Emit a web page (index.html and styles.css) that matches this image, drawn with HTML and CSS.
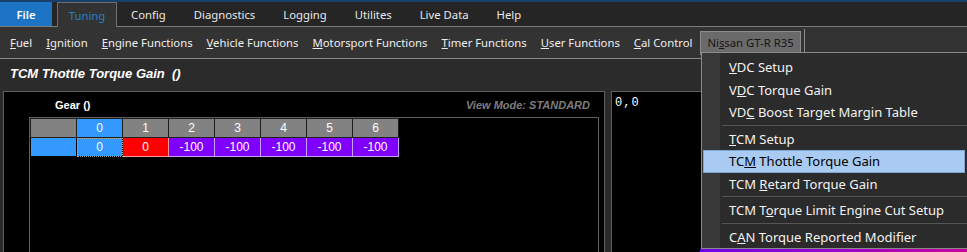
FILE: index.html
```html
<!DOCTYPE html>
<html lang="en">
<head>
    <meta charset="UTF-8">
    <title>TCM Thottle Torque Gain</title>
    <link rel="stylesheet" href="styles.css">
</head>
<body>
    <!--top tabs-->
    <header class="appbar">
        <nav class="tabs">
            <a class="tab file" href="#">File</a>
            <a class="tab on" href="#">Tuning</a>
            <a class="tab" href="#">Config</a>
            <a class="tab" href="#">Diagnostics</a>
            <a class="tab" href="#">Logging</a>
            <a class="tab" href="#">Utilites</a>
            <a class="tab" href="#">Live Data</a>
            <a class="tab" href="#">Help</a>
        </nav>
        <!--ribbon menu-->
        <nav class="ribbon">
            <a href="#"><u>F</u>uel</a>
            <a href="#"><u>I</u>gnition</a>
            <a href="#"><u>E</u>ngine Functions</a>
            <a href="#"><u>V</u>ehicle Functions</a>
            <a href="#"><u>M</u>otorsport Functions</a>
            <a href="#"><u>T</u>imer Functions</a>
            <a href="#"><u>U</u>ser Functions</a>
            <a href="#"><u>C</u>al Control</a>
            <a class="open" href="#">Ni<u>s</u>san GT-R R35</a>
            <span class="rsep"></span>
        </nav>
    </header>

    <h1 class="mtit">TCM Thottle Torque Gain&nbsp; ()</h1>

    <main class="work">
        <!--table panel-->
        <section class="tpanel">
            <div class="thead">
                <span class="axis">Gear ()</span>
                <span class="vmode">View Mode: STANDARD</span>
            </div>
            <div class="grid">
                <table class="map">
                    <tr class="hrow">
                        <td class="corner"></td>
                        <td class="sel">0</td>
                        <td>1</td>
                        <td>2</td>
                        <td>3</td>
                        <td>4</td>
                        <td>5</td>
                        <td>6</td>
                    </tr>
                    <tr class="drow">
                        <td class="rhead"></td>
                        <td class="cur">0</td>
                        <td class="red">0</td>
                        <td class="pur">-100</td>
                        <td class="pur">-100</td>
                        <td class="pur">-100</td>
                        <td class="pur">-100</td>
                        <td class="pur">-100</td>
                    </tr>
                </table>
            </div>
        </section>
        <!--graph panel-->
        <section class="gpanel">
            <span class="coord">0,0</span>
            <span class="gstripe"></span>
        </section>
    </main>

    <!--dropdown-->
    <ul class="dmenu">
        <li><u>V</u>DC Setup</li>
        <li>V<u>D</u>C Torque Gain</li>
        <li>VD<u>C</u> Boost Target Margin Table</li>
        <li class="sep"></li>
        <li><u>T</u>CM Setup</li>
        <li class="hot">TC<u>M</u> Thottle Torque Gain</li>
        <li>TCM <u>R</u>etard Torque Gain</li>
        <li class="sep"></li>
        <li>TCM T<u>o</u>rque Limit Engine Cut Setup</li>
        <li class="sep"></li>
        <li>C<u>A</u>N Torque Reported Modifier</li>
    </ul>
</body>
</html>
```

FILE: styles.css
```css
html,
body,
ul,
h1 {
    margin: 0;
    padding: 0;
}

body {
    position: relative;
    width: 967px;
    height: 252px;
    overflow: hidden;
    background-color: #2b2b2b;
    font-family: "Noto Sans", "Open Sans", sans-serif;
    color: #eee;
}

a {
    color: inherit;
    text-decoration: none;
}

/*1.tabs*/
.appbar {
    border-top: 2px solid #17406a;
}

.tabs {
    display: flex;
    height: 24px;
    background: #252525;
    border-bottom: 1px solid #7c7c7c;
    font-size: 11.3px;
}

.tab {
    display: flex;
    align-items: center;
    padding: 0 14px;
    color: #e8e8e8;
}

.tab.file {
    width: 52px;
    padding: 0;
    justify-content: center;
    margin-right: 5px;
    background: #1d73c4;
    color: #fff;
    font-weight: 600;
}

.tab.on {
    box-sizing: border-box;
    width: 60px;
    padding: 0;
    justify-content: center;
    margin-bottom: -1px;
    background: #333;
    border: 1px solid #6e6e6e;
    border-bottom: 0;
    color: #2a7dc4;
}

/*2.ribbon*/
.ribbon {
    display: flex;
    align-items: center;
    height: 31px;
    padding-left: 3px;
    background: #333;
    border-bottom: 1px solid #8a8a8a;
    font-size: 11.3px;
}

.ribbon a {
    padding: 0 7px;
    line-height: 22px;
}

.ribbon .open {
    margin-left: 1px;
    padding: 0 6px;
    background: #6a6a6a;
    border: 1px solid #8c8c8c;
    color: #151515;
}

.rsep {
    align-self: stretch;
    margin: 2px 0 0 3px;
    border-left: 1px solid #8a8a8a;
}

/*3.title*/
.mtit {
    height: 32px;
    padding-left: 10px;
    font: italic bold 13px/30px "Liberation Sans", sans-serif;
    color: #fff;
}

/*4.work area*/
.work {
    display: flex;
    height: 161px;
    padding-left: 3px;
}

.tpanel {
    display: flex;
    flex-direction: column;
    width: 600px;
    background: #000;
    border: 1px solid #5e5e5e;
    border-bottom: 0;
}

.thead {
    display: flex;
    justify-content: space-between;
    height: 25px;
    padding: 0 14px 0 51px;
    align-items: center;
    font: bold 11px "Liberation Sans", sans-serif;
}

.axis {
    color: #fff;
}

.vmode {
    color: #7d7d7d;
    font-style: italic;
}

.grid {
    flex: 1;
    margin-left: 25px;
    width: 568px;
    border: 1px solid #5e5e5e;
    border-bottom: 0;
}

.map {
    border-collapse: collapse;
    font: 12px "Liberation Sans", sans-serif;
    color: #fff;
}

.map td {
    width: 45px;
    height: 18px;
    padding: 0;
    text-align: center;
    border: 1px solid #000;
    line-height: 16px;
}

.hrow td {
    background: #828282;
    border-color: #1e1e1e;
}

.hrow .sel,
.rhead {
    background: #3399ff;
}

.drow .cur {
    background: #3399ff;
    outline: 1px dotted #aaa;
    outline-offset: -1px;
}

.drow .red {
    background: #ff0000;
    border-color: #ff9a9a;
}

.drow .pur {
    background: #8000ff;
    border-color: #c9a2ff;
}

/*graph*/
.gpanel {
    display: flex;
    flex-direction: column;
    flex: 1;
    margin-left: 6px;
    background: #000;
    border: 1px solid #5e5e5e;
    border-bottom: 0;
    border-right: 0;
}

.coord {
    padding: 4px 0 0 3px;
    font: 12px "Liberation Mono", monospace;
    color: #fff;
    letter-spacing: 1px;
}

.gstripe {
    margin: auto 0 0 88px;
    height: 3px;
    background: linear-gradient(90deg, #6a00e8, #9a00d0 50%, #c8009a);
}

/*5.dropdown*/
.dmenu {
    position: absolute;
    top: 52px;
    left: 701px;
    width: 270px;
    height: 197px;
    box-sizing: border-box;
    padding: 3px 0 0 1px;
    list-style: none;
    background: linear-gradient(90deg, #383838 18px, #2b2b2b 18px);
    border: 1px solid #8a8a8a;
    font-size: 13px;
    color: #f2f2f2;
}

.dmenu li {
    height: 22.5px;
    line-height: 22px;
    padding-left: 26px;
    box-sizing: border-box;
}

.dmenu .sep {
    height: 4px;
    margin-left: 19px;
    padding: 0;
    background: linear-gradient(#555, #555) no-repeat 0 1px / 100% 1px;
}

.dmenu .hot {
    background: #a9caf1;
    border: 1px solid #7fa5d4;
    padding-left: 25px;
    margin-right: 5px;
    color: #000;
    line-height: 20px;
}
```
